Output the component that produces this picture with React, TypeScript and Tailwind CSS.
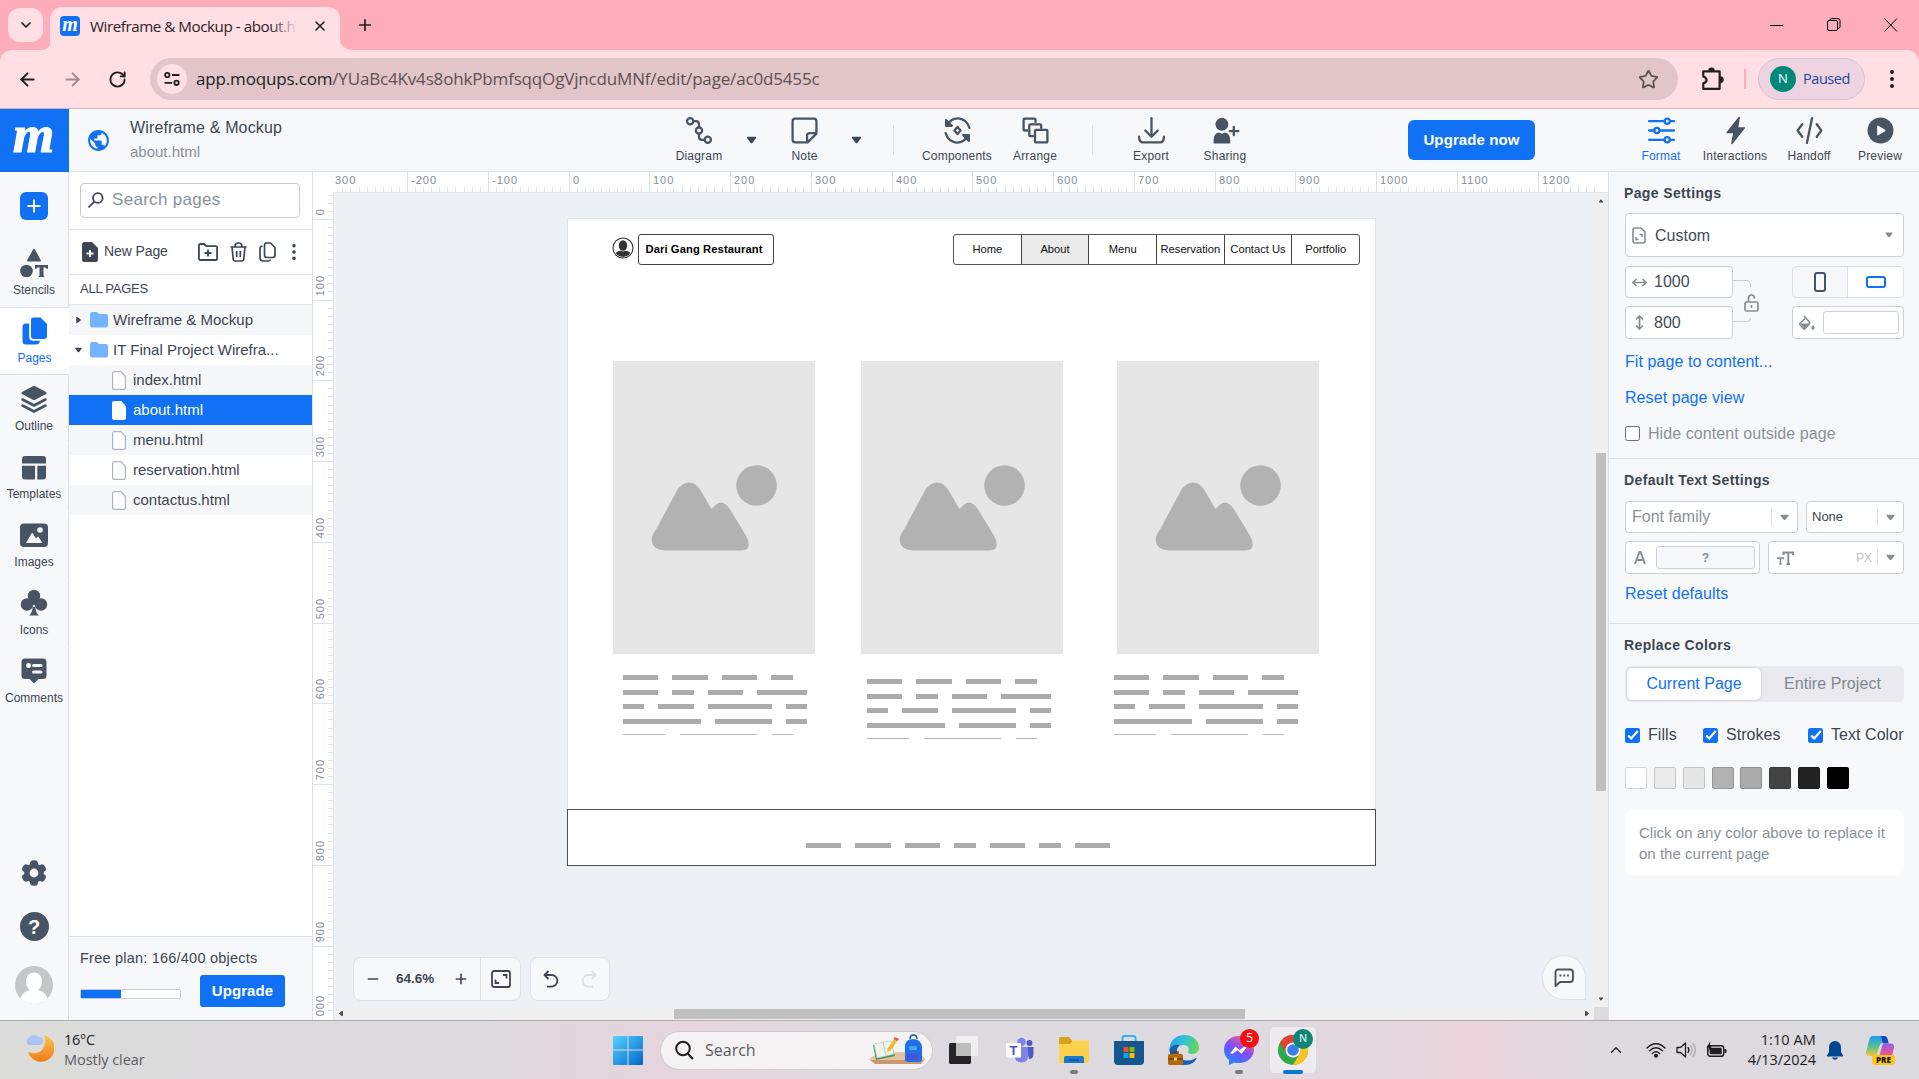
import React from "react";
import {
  ArrowLeft,
  ArrowRight,
  RotateCw,
  Star,
  Plus,
  X,
  ChevronDown,
  ChevronUp,
  Minus,
} from "lucide-react";

const arial = "font-['Liberation_Sans',Arial,sans-serif]";
const segoe = "font-['Open_Sans','Noto_Sans',sans-serif]";

function Caret({ className = "" }: { className?: string }) {
  return (
    <svg viewBox="0 0 10 8" className={`shrink-0 ${className}`} fill="currentColor">
      <path d="M1.2 .8h7.6c.8 0 1.1.8.6 1.4L6 6.7c-.5.7-1.5.7-2 0L.6 2.2C.1 1.6.4.8 1.2.8z" />
    </svg>
  );
}

function Dots({ className = "" }: { className?: string }) {
  return (
    <svg viewBox="0 0 6 20" className={className} fill="currentColor">
      <circle cx="3" cy="3" r="2" />
      <circle cx="3" cy="10" r="2" />
      <circle cx="3" cy="17" r="2" />
    </svg>
  );
}

/* ---------- Browser chrome ---------- */

function TabStrip() {
  return (
    <div className={`flex h-[50px] shrink-0 items-end bg-[#ffadbb] ${segoe}`}>
      <div className="mb-2 ml-2 flex h-[34px] w-[35px] items-center justify-center rounded-xl bg-[#ffdee4] text-[#1f1f1f]">
        <ChevronDown size={16} strokeWidth={2.6} />
      </div>
      <svg viewBox="0 0 10 10" className="-mr-px h-[10px] w-[8px]" preserveAspectRatio="none">
        <path d="M10 0A10 10 0 0 1 0 10h10z" fill="#ffdee4" />
      </svg>
      <div className="flex h-[43px] w-[290px] items-center rounded-t-xl bg-[#ffdee4] pr-[12px] pb-[5px] pl-[10px]">
        <div className="flex size-5 items-center justify-center rounded-[4px] bg-[#1171f4]">
          <span className="-mt-[5px] font-['Liberation_Serif',serif] text-[20px] leading-none font-bold text-white italic">
            m
          </span>
        </div>
        <div className="relative ml-[10px] w-[208px] overflow-hidden text-[15.2px] leading-6 tracking-[-0.46px] whitespace-nowrap text-[#2b2224]">
          Wireframe &amp; Mockup - about.h
          <div className="absolute inset-y-0 right-0 w-7 bg-linear-to-r from-transparent to-[#ffdee4]" />
        </div>
        <X className="ml-auto text-[#1f1f1f]" size={16} strokeWidth={2.4} />
      </div>
      <svg viewBox="0 0 10 10" className="h-[10px] w-[12px]" preserveAspectRatio="none">
        <path d="M0 0A10 10 0 0 0 10 10H0z" fill="#ffdee4" />
      </svg>
      <Plus className="mb-[16px] ml-[4px] text-[#1f1f1f]" size={18} strokeWidth={2.3} />
      <div className="mb-[18px] ml-auto flex items-center gap-[43px] pr-[21px] text-black">
        <svg viewBox="0 0 14 14" className="size-[14px]" stroke="currentColor">
          <path d="M0 7.5h13" />
        </svg>
        <svg viewBox="0 0 14 14" className="size-[14px]" fill="none" stroke="currentColor">
          <rect x=".5" y="2.5" width="10" height="10" rx="1.5" />
          <path d="M3 2.5V2Q3 .6 4.5.6H11Q13 .6 13 2.6v6Q13 10.5 11 10.5" />
        </svg>
        <svg viewBox="0 0 14 14" className="size-[14px]" stroke="currentColor">
          <path d="M.5.5l12.5 13M13 .5L.5 13.5" />
        </svg>
      </div>
    </div>
  );
}

function AddressBar() {
  return (
    <div className={`h-[59px] shrink-0 bg-[#ffadbb] ${segoe}`}>
      <div className="flex h-full items-center rounded-t-xl border-b border-[#cfb4b9] bg-[#ffdee4]">
        <ArrowLeft className="ml-[17px] text-[#1f1f1f]" size={21} strokeWidth={2.2} />
        <ArrowRight className="ml-[24px] text-[#a08b8f]" size={21} strokeWidth={2.2} />
        <RotateCw className="ml-[25px] text-[#1f1f1f]" size={19} strokeWidth={2.4} />
        <div className="ml-[23px] flex h-[42px] w-[1528px] items-center rounded-full bg-[#e1c5c9] pl-[7px]">
          <div className="flex size-[30px] items-center justify-center rounded-full bg-[#ffdee4]">
            <svg viewBox="0 0 18 18" className="size-[18px]" fill="none" stroke="#1f1f1f" strokeWidth="1.8">
              <circle cx="4.3" cy="5" r="2.2" />
              <path d="M9 5h7.5M1.500 12.800H9" />
              <circle cx="13.500" cy="12.800" r="2.200" />
            </svg>
          </div>
          <div className="ml-[9px] text-[17px] tracking-[-0.165px] whitespace-nowrap text-[#5f5054]">
            <span className="text-[#1f1f1f]">app.moqups.com</span>
            /YUaBc4Kv4s8ohkPbmfsqqOgVjncduMNf/edit/page/ac0d5455c
          </div>
          <Star className="mr-[19px] ml-auto text-[#5f5054]" size={21} strokeWidth={2} />
        </div>
        <svg viewBox="0 0 22 22" className="ml-[22px] size-[24px]" fill="none" stroke="#1f1f1f" strokeWidth="2">
          <path d="M3 4h15v16H3v-5q3-.8 3-3T3 8.700z" strokeLinejoin="round" />
          <path d="M8.500 3.500a2 2 0 0 1 4 0M18.500 9.500a2.200 2.200 0 0 1 0 4.400" fill="#1f1f1f" />
        </svg>
        <div className="ml-[20px] h-[20px] w-[2px] bg-[#ffadbb]" />
        <div className="ml-[12px] flex h-[42px] w-[107px] items-center rounded-full border border-[#d6c3d3] bg-[#edd4e0] pl-[11px]">
          <div className="flex size-[26px] items-center justify-center rounded-full bg-[#00897b] text-[13px] text-white">
            N
          </div>
          <span className="ml-[7px] text-[14.500px] tracking-[-0.450px] text-[#23479b]">Paused</span>
        </div>
        <Dots className="ml-[24px] h-[20px] w-[6px] text-[#1f1f1f]" />
      </div>
    </div>
  );
}

/* ---------- App header ---------- */

function Tool({
  label,
  className,
  children,
}: {
  label: string;
  className: string;
  children: React.ReactNode;
}) {
  return (
    <div className={`flex h-full shrink-0 flex-col items-center pt-[7px] ${className}`}>
      <svg viewBox="0 0 28 28" className="size-[29px]" fill="none" stroke="currentColor" strokeWidth="2.200" strokeLinecap="round" strokeLinejoin="round">
        {children}
      </svg>
      <span className="mt-[3px] text-[12px] leading-4 tracking-[0.200px] text-[#3c4654] in-data-active:text-[#1171f4]">{label}</span>
    </div>
  );
}

function HeaderRule({ className }: { className: string }) {
  return (
    <div className={`flex shrink-0 justify-center ${className}`}>
      <div className="h-[30px] w-px bg-[#dcdfe5]" />
    </div>
  );
}

function Header() {
  return (
    <header className="flex h-[63px] shrink-0 items-center bg-[#f7f8fa] text-[#475464]">
      <div className="flex h-full w-[69px] shrink-0 items-center justify-center bg-[#1171f4]">
        <span className="-mt-[12px] -ml-[2px] font-['Liberation_Serif',serif] text-[53px] leading-none font-bold text-white italic [-webkit-text-stroke:1.200px_#fff]">
          m
        </span>
      </div>
      <div className="flex h-full flex-1 items-center border-b border-[#dddfe6]">
        <svg viewBox="0 0 24 24" className="ml-[17px] size-[25px] shrink-0" fill="#1171f4">
          <path d="M12 2C6.480 2 2 6.480 2 12s4.480 10 10 10 10-4.480 10-10S17.520 2 12 2zm-1 17.930c-3.950-.490-7-3.850-7-7.930 0-.620.080-1.210.210-1.790L9 15v1c0 1.100.900 2 2 2v1.930zm6.900-2.540c-.260-.810-1-1.390-1.900-1.390h-1v-3c0-.550-.450-1-1-1H8v-2h2c.550 0 1-.450 1-1V7h2c1.100 0 2-.900 2-2v-.410c2.930 1.190 5 4.060 5 7.410 0 2.080-.800 3.970-2.100 5.390z" />
        </svg>
        <div className="ml-[19px] w-[538px] shrink-0">
          <div className="text-[16px] leading-[22px] tracking-[0.150px] text-[#3c4654]">Wireframe &amp; Mockup</div>
          <div className="mt-[2px] text-[15px] leading-[22px] text-[#8a9298]">about.html</div>
        </div>
        <Tool label="Diagram" className="w-[62px]">
          <circle cx="5" cy="5" r="3" />
          <circle cx="13.500" cy="14" r="3" />
          <circle cx="22" cy="23" r="3" />
          <path d="M8 5h2.500q3 0 3 3v3M13.500 17v3q0 3 3 3H19" />
        </Tool>
        <div className="flex w-[42px] shrink-0 justify-center text-[#3c4654]">
          <Caret className="h-[8px] w-[11px]" />
        </div>
        <Tool label="Note" className="w-[65px]">
          <path d="M5 2.500h18q2.500 0 2.500 2.500v12l-8.500 8.500H5Q2.500 25.500 2.500 23V5Q2.500 2.500 5 2.500zM16.500 25v-6q0-2.500 2.500-2.500h6" />
        </Tool>
        <div className="flex w-[39px] shrink-0 justify-center text-[#3c4654]">
          <Caret className="h-[8px] w-[11px]" />
        </div>
        <HeaderRule className="w-[34px]" />
        <Tool label="Components" className="w-[94px]">
          <path d="M4 9Q8 2 15 2.400q8 1 10.500 9M24 19q-4 7-11 6.600-8-1-10.500-9" />
          <path d="M3 4v5.500h5.500zM25 24v-5.500h-5.500z" fill="currentColor" />
          <path d="M14 10.500l3 3.500-3 3.500-3-3.500z" />
        </Tool>
        <Tool label="Arrange" className="w-[62px]">
          <path d="M6 14H3.500Q2.500 14 2.500 13V3.500q0-1 1-1H13q1 0 1 1V6" />
          <path d="M11.500 19.500H9q-1 0-1-1V9q0-1 1-1h9.500q1 0 1 1v2.500" />
          <rect x="13.500" y="13.500" width="12" height="12" rx="1" />
        </Tool>
        <HeaderRule className="w-[52px]" />
        <Tool label="Export" className="w-[66px]">
          <path d="M14 2v17M8 14l6 6 6-6M2 20q0 5.500 4 5.500h16q4 0 4-5.500" />
        </Tool>
        <Tool label="Sharing" className="w-[82px]">
          <circle cx="10.500" cy="8" r="6.200" fill="currentColor" stroke="none" />
          <path d="M2.500 26.500v-3q0-6.500 5-7.500l3 1.200 3-1.200q5 1 5 7.500v3z" fill="currentColor" stroke="none" />
          <path d="M22 10.500v8M18 14.500h8.500" />
        </Tool>
        <div className="ml-[142px] flex h-[40px] w-[127px] shrink-0 items-center justify-center rounded-md bg-[#1171f4] text-[15px] font-bold tracking-[0.100px] text-white">
          Upgrade now
        </div>
        <div className="w-[91px] shrink-0" />
        <div data-active className="h-full text-[#1171f4]">
          <Tool label="Format" className="w-[70px]">
            <path d="M2 5h15M23 5h3M2 14h5M13 14h13M2 23h15M23 23h3" />
            <circle cx="19.500" cy="5" r="2.500" />
            <circle cx="9.500" cy="14" r="2.500" />
            <circle cx="19.500" cy="23" r="2.500" />
          </Tool>
        </div>
        <Tool label="Interactions" className="w-[78px]">
          <path d="M17.500 1.500L6 16h6.500L10.500 26.500 22.500 11.500H16z" fill="currentColor" strokeWidth="1.400" />
        </Tool>
        <Tool label="Handoff" className="w-[70px]">
          <path d="M7 8l-4.500 6L7 20M21 8l4.500 6L21 20M16.500 2l-5 24" />
        </Tool>
        <Tool label="Preview" className="w-[72px]">
          <circle cx="14" cy="14" r="12.500" fill="currentColor" stroke="none" />
          <path d="M11.500 10v8l6.500-4z" fill="#f7f8fa" stroke="#f7f8fa" strokeWidth="1.500" />
        </Tool>
      </div>
    </header>
  );
}

/* ---------- Left rail ---------- */

function RailItem({ label, active, children }: { label: string; active?: boolean; children: React.ReactNode }) {
  return (
    <div
      className={`flex h-[68px] w-[69px] shrink-0 flex-col items-center border-y pt-[9px] ${
        active ? "border-[#dddfe6] bg-white text-[#1171f4]" : "border-r border-y-transparent border-r-[#dddfe6] text-[#475464]"
      }`}
    >
      <svg viewBox="0 0 28 28" className="size-[28px]" fill="currentColor">
        {children}
      </svg>
      <span className={`mt-[5px] text-[12px] leading-4 ${active ? "" : "text-[#3c4654]"}`}>{label}</span>
    </div>
  );
}

function Rail() {
  return (
    <div className="flex w-[69px] shrink-0 flex-col bg-[#f7f8fa]">
      <div className="flex h-[67px] shrink-0 justify-center border-r border-[#dddfe6] pt-[20px]">
        <div className="flex size-[28px] items-center justify-center rounded-md bg-[#1171f4] text-white">
          <Plus size={20} strokeWidth={2.2} />
        </div>
      </div>
      <RailItem label="Stencils">
        <path d="M14 0q.7 0 1.200.9l5.500 10q.6 1.600-1 1.600H8.300q-1.600 0-1-1.600l5.500-10Q13.300 0 14 0z" />
        <circle cx="6.500" cy="22" r="6.300" />
        <path d="M15 16h13v3.800h-1.500q-.3-1.600-2-1.600h-1v8q0 1.200 1.200 1.500V29h-6.400v-1.300q1.200-.3 1.200-1.500v-8h-1q-1.700 0-2 1.600H15z" />
      </RailItem>
      <RailItem label="Pages" active>
        <path d="M12 .5h7.500L26 7v12q0 3-3 3H13q-3 0-3-3V3Q10 .5 12 .5z" />
        <path d="M8.200 6.500v13.300q0 4 4 4h6.800q-.5 3.700-4 3.700H5q-3.500 0-3.500-3.500V10q0-3.500 3-3.500z" />
      </RailItem>
      <RailItem label="Outline">
        <path d="M12.800 1.300q1.200-.6 2.400 0L26 7q1.400 1 0 2l-10.800 5.800q-1.200.6-2.400 0L2 9Q.6 8 2 7z" />
        <g fill="none" stroke="currentColor" strokeWidth="2.600" strokeLinejoin="round" strokeLinecap="round">
          <path d="M2.500 14.500L14 20.500l11.500-6M2.500 20.500L14 26.500l11.500-6" />
        </g>
      </RailItem>
      <RailItem label="Templates">
        <path d="M5 3h18q3 0 3 3v4.500H2V6q0-3 3-3zM2 12.800h13v13.700H5q-3 0-3-3zM17.300 12.800H26v10.700q0 3-3 3h-5.700z" />
      </RailItem>
      <RailItem label="Images">
        <rect x="0" y="2.500" width="28" height="23.500" rx="4" />
        <circle cx="20" cy="9" r="2.800" fill="#f7f8fa" />
        <path d="M6 22l5.500-9.500q.7-.9 1.400 0l3 5 1.500-1.600q.7-.7 1.300 0L22.500 22z" fill="#f7f8fa" />
      </RailItem>
      <RailItem label="Icons">
        <circle cx="14" cy="7" r="6.200" />
        <circle cx="7" cy="15.500" r="6.200" />
        <circle cx="21" cy="15.500" r="6.200" />
        <path d="M10 8h8v8h-8zM12.700 18h2.600q0 5 3.700 8.500H9q3.700-3.500 3.700-8.500z" />
      </RailItem>
      <RailItem label="Comments">
        <path d="M5 1.500h18q3.500 0 3.500 3.500v13.500q0 3.500-3.500 3.500h-4.500L14 26.500 9.500 22H5q-3.500 0-3.500-3.500V5Q1.500 1.500 5 1.500z" />
        <circle cx="8.500" cy="8.500" r="2.500" fill="#f7f8fa" />
        <path d="M13.500 8.500h7.500M13.500 15h7.500" stroke="#f7f8fa" strokeWidth="3" strokeLinecap="round" />
      </RailItem>
      <div className="flex flex-1 flex-col items-center border-r border-[#dddfe6] pt-[144px]">
        <svg viewBox="0 0 28 28" className="size-[28px]">
          <g fill="#475464">
            {[0, 60, 120].map((a) => (
              <rect key={a} x="10" y="1.200" width="8" height="25.600" rx="3.500" transform={`rotate(${a} 14 14)`} />
            ))}
            <circle cx="14" cy="14" r="9.800" />
          </g>
          <circle cx="14" cy="14" r="4.400" fill="#f7f8fa" />
        </svg>
        <div className="mt-[25px] flex size-[29px] items-center justify-center rounded-full bg-[#475464] text-[20px] font-bold text-white">
          ?
        </div>
        <svg viewBox="0 0 38 38" className="mt-[25px] size-[38px]">
          <clipPath id="face">
            <circle cx="19" cy="19" r="19" />
          </clipPath>
          <g clipPath="url(#face)">
            <rect width="38" height="38" fill="#c4c6c8" />
            <path d="M19 6.500c5 0 8 3.800 8 8.800 0 4-1.500 7-4 8.700 5 1 9.500 4 11 14H4c1.500-10 6-13 11-14-2.500-1.700-4-4.700-4-8.700 0-5 3-8.800 8-8.800z" fill="#fff" />
          </g>
        </svg>
      </div>
    </div>
  );
}

/* ---------- Pages panel ---------- */

function FolderRow({ name, open, shaded }: { name: string; open?: boolean; shaded?: boolean }) {
  return (
    <div className={`flex h-[30px] items-center pl-[6px] ${shaded ? "bg-[#f6f7f9]" : ""}`}>
      <Caret className={`h-[6px] w-[7px] text-[#3c4654] ${open ? "" : "-rotate-90"}`} />
      <svg viewBox="0 0 18 16" className="ml-[8px] h-[16px] w-[18px]" fill="#74b4ff">
        <path d="M2 0h4.500q1 0 1.500.8L9 2h7q2 0 2 2v9.500q0 2-2 2H2q-2 0-2-2V2Q0 0 2 0z" />
      </svg>
      <span className="ml-[5px] text-[15px] whitespace-nowrap">{name}</span>
    </div>
  );
}

function PageRow({ name, selected, shaded }: { name: string; selected?: boolean; shaded?: boolean }) {
  return (
    <div
      className={`flex h-[30px] items-center pl-[43px] ${
        selected ? "bg-[#1171f4] text-white" : shaded ? "bg-[#f6f7f9]" : ""
      }`}
    >
      <svg viewBox="0 0 14 19" className="h-[19px] w-[14px]" fill="#fff" stroke={selected ? "#fff" : "#aeb4bd"} strokeWidth="1.200">
        <path d="M2.200.6H9L13.400 5.500v11.300q0 1.600-1.600 1.600H2.200q-1.600 0-1.600-1.600V2.200Q.6.6 2.200.6z" />
      </svg>
      <span className="ml-[7px] text-[15px]">{name}</span>
    </div>
  );
}

function PagesPanel() {
  return (
    <div className="flex w-[244px] shrink-0 flex-col border-r border-[#dddfe6] bg-white text-[#3c4654]">
      <div className="border-b border-[#e4e6eb] px-[11px] pt-[11px] pb-[11px]">
        <div className="flex h-[35px] w-[220px] items-center rounded-[4px] border border-[#c9ccd3] pb-px pl-[7px]">
          <svg viewBox="0 0 16 16" className="size-[16px]" fill="none" stroke="#3c4654" strokeWidth="1.800" strokeLinecap="round">
            <circle cx="9.800" cy="6" r="4.800" />
            <path d="M6 9.800L1 14.800" />
          </svg>
          <span className="ml-[8px] text-[17px] tracking-[0.300px] text-[#8a9298]">Search pages</span>
        </div>
      </div>
      <div className="flex h-[45px] items-center border-b border-[#e4e6eb] pl-[13px]">
        <svg viewBox="0 0 16 20" className="h-[20px] w-[16px]">
          <path d="M2.500 0H10l6 6v11.500q0 2.500-2.500 2.500h-11Q0 20 0 17.500v-15Q0 0 2.500 0z" fill="#3c4654" />
          <path d="M8 8v7M4.500 11.500h7" stroke="#fff" strokeWidth="1.800" />
        </svg>
        <span className="mt-[-2px] ml-[6px] w-[94px] text-[14px] tracking-[-0.100px]">New Page</span>
        <svg viewBox="0 0 20 18" className="h-[18px] w-[20px]" fill="none" stroke="#3c4654" strokeWidth="1.800" strokeLinejoin="round">
          <path d="M2.500 1H6l2.200 2.200h9.300q1.600 0 1.600 1.600v10.600Q19.100 17 17.500 17h-15Q.9 17 .9 15.400V2.600Q.9 1 2.500 1zM10 6.500v7M6.500 10h7" />
        </svg>
        <svg viewBox="0 0 17 20" className="ml-[12px] h-[20px] w-[17px]" fill="none" stroke="#3c4654" strokeWidth="1.700" strokeLinejoin="round">
          <path d="M.5 5h16M2 5l1.200 12q.2 2 2 2h6.600q1.800 0 2-2L15 5M5 4.500q0-3.500 3.500-3.500T12 4.500M6.700 9v6M10.300 9v6" />
        </svg>
        <svg viewBox="0 0 17 20" className="ml-[12px] h-[20px] w-[17px]" fill="none" stroke="#3c4654" strokeWidth="1.700" strokeLinejoin="round">
          <path d="M7.500 1h4l4.500 4.500V13q0 2.500-2.500 2.500H8Q5.500 15.500 5.500 13V3.500Q5.500 1 7.500 1zM3.500 4Q1 4.200 1 7v8.500Q1 19 4.500 19H9q2 0 2.500-1.500" />
        </svg>
        <Dots className="ml-[15px] h-[18px] w-[6px]" />
      </div>
      <div className="flex h-[30px] items-center border-b border-[#e4e6eb] pb-[2px] pl-[11px] text-[13px] tracking-[-0.250px]">ALL PAGES</div>
      <FolderRow name="Wireframe & Mockup" shaded />
      <FolderRow name="IT Final Project Wirefra..." open />
      <PageRow name="index.html" shaded />
      <PageRow name="about.html" selected />
      <PageRow name="menu.html" shaded />
      <PageRow name="reservation.html" />
      <PageRow name="contactus.html" shaded />
      <div className="mt-auto h-[84px] border-t border-[#dddfe6] bg-[#f7f8fa] pt-[11px] pl-[11px]">
        <div className="text-[14.500px] leading-[20px] tracking-[0.220px]">Free plan: 166/400 objects</div>
        <div className="mt-[7px] flex items-center">
          <div className="mt-[6px] h-[10px] w-[101px] rounded-[2px] border border-[#c9ccd3] bg-white">
            <div className="h-full w-[40px] bg-[#1171f4]" />
          </div>
          <div className="ml-[19px] flex h-[32px] w-[85px] items-center justify-center rounded-[3px] bg-[#1171f4] text-[15px] font-bold tracking-[0.100px] text-white">
            Upgrade
          </div>
        </div>
      </div>
    </div>
  );
}

/* ---------- Canvas ---------- */

const UNIT = 0.8075;
const hMajors = [-200, -100, 0, 100, 200, 300, 400, 500, 600, 700, 800, 900, 1000, 1100, 1200];
const vMajors = [0, 100, 200, 300, 400, 500, 600, 700, 800, 900];
const hMinors = Array.from({ length: 156 }, (_, i) => i * 10 - 280);
const vMinors = Array.from({ length: 102 }, (_, i) => i * 10 - 30);

function TopRuler() {
  return (
    <div className="relative ml-[21px] h-[21px] shrink-0 overflow-hidden border-b border-[#e4e6eb] bg-white text-[11px] leading-[16px] tracking-[1px] text-[#858d96]">
      <span className="absolute top-0 left-[1px]">300</span>
      {hMinors.map((v) => (
        <i key={v} className="absolute bottom-0 h-[5px] w-px bg-[#dfe1e7]" style={{ left: Math.round(234.500 + v * UNIT) }} />
      ))}
      {hMajors.map((v) => (
        <span key={v} className="absolute top-0 h-[21px] border-l border-[#dfe1e7] pl-[3px]" style={{ left: Math.round(234.500 + v * UNIT) }}>
          {v}
        </span>
      ))}
    </div>
  );
}

function SideRuler() {
  return (
    <div className="relative w-[21px] shrink-0 overflow-hidden border-r border-[#e4e6eb] bg-white text-[11px] leading-[14px] tracking-[1px] text-[#858d96]">
      {vMinors.map((v) => (
        <i key={v} className="absolute right-0 h-px w-[5px] bg-[#dfe1e7]" style={{ top: Math.round(25.800 + v * UNIT) }} />
      ))}
      {vMajors.map((v) => (
        <div key={v} className="absolute left-0 h-px w-[21px] bg-[#dfe1e7]" style={{ top: Math.round(25.800 + v * UNIT) }}>
          <span className="absolute bottom-[5px] left-0 rotate-180 [writing-mode:vertical-rl]">{v}</span>
        </div>
      ))}
      <span className="absolute top-[802px] left-0 rotate-180 [writing-mode:vertical-rl]">000</span>
    </div>
  );
}

const loremRows = [
  [5, 5, 5, 3],
  [5, 3, 5, 7],
  [3, 5, 9, 3],
  [11, 8, 3],
  [6, 11, 3],
];

function Bars({ words, thin }: { words: number[]; thin?: boolean }) {
  return (
    <div className="flex gap-[14.100px]">
      {words.map((n, i) => (
        <div key={i} className={thin ? "h-px bg-[#b8b8b8]" : "h-[5px] bg-[#ababab]"} style={{ width: n * 7.08 }} />
      ))}
    </div>
  );
}

function Lorem({ className }: { className: string }) {
  return (
    <div className={`absolute flex flex-col gap-[9.700px] ${className}`}>
      {loremRows.map((r, i) => (
        <Bars key={i} words={r} thin={i === 4} />
      ))}
    </div>
  );
}

function ImageStub({ className }: { className: string }) {
  return (
    <svg viewBox="0 0 202 293" className={`absolute top-[142px] h-[293px] w-[202px] bg-[#e6e6e6] ${className}`} fill="#b2b2b2">
      <circle cx="143.500" cy="124.500" r="20.300" />
      <path d="M65 127.500Q70.500 121.500 76 121.500Q82.500 121.500 87 128.500L98.500 148Q104 141.500 108 141.500Q112 141.500 116.500 147.500L133.500 175.500Q140 189.500 128 189.500H52Q37 188.500 39 176Q39.500 173.500 43 168.500Z" />
    </svg>
  );
}

function Artboard() {
  return (
    <div className="absolute top-[25px] left-[233px] h-[648px] w-[809px] border border-[#e1e4ea] bg-white text-black">
      <svg viewBox="0 0 22 22" className="absolute top-[18px] left-[44px] size-[22px]">
        <clipPath id="user">
          <circle cx="11" cy="11" r="9" />
        </clipPath>
        <circle cx="11" cy="11" r="10" fill="#fff" stroke="#333" strokeWidth="1.100" />
        <g clipPath="url(#user)" fill="#333">
          <ellipse cx="11" cy="8.500" rx="4.200" ry="5.300" />
          <path d="M2 22q0-7.500 6.500-8.200l2.500.7 2.500-.7q6.500.7 6.500 8.200z" />
        </g>
      </svg>
      <div className="absolute top-[15px] left-[70px] flex h-[31px] w-[136px] items-center justify-center rounded-[3px] border border-[#444] pr-[4px] text-[11.200px] font-bold">
        <span className="tracking-[0.100px] whitespace-nowrap">Dari Gang Restaurant</span>
      </div>
      <div className="absolute top-[15px] left-[385px] flex h-[31px] w-[407px] divide-x divide-[#444] overflow-hidden rounded-[3px] border border-[#555] text-[11.200px] whitespace-nowrap text-[#111]">
        {["Home", "About", "Menu", "Reservation", "Contact Us", "Portfolio"].map((t) => (
          <div key={t} className={`flex flex-1 basis-0 items-center justify-center ${t === "About" ? "bg-[#ebebeb]" : ""}`}>
            <span className="-mx-2">{t}</span>
          </div>
        ))}
      </div>
      <ImageStub className="left-[45px]" />
      <ImageStub className="left-[293px]" />
      <ImageStub className="left-[549px]" />
      <Lorem className="top-[456px] left-[55px]" />
      <Lorem className="top-[460px] left-[299px]" />
      <Lorem className="top-[456px] left-[546px]" />
      <div className="absolute top-[590px] -left-px h-[57px] w-[809px] border border-[#4a4f52] bg-white pt-[33px] pl-[238px]">
        <Bars words={[5, 5, 5, 3, 5, 3, 5]} />
      </div>
    </div>
  );
}

function CanvasControls() {
  return (
    <>
      <div className="absolute bottom-[6px] left-[19px] flex h-[44px] items-center gap-[9px] text-[#3c4654]">
        <div className="flex h-full w-[168px] items-center rounded-lg border border-[#dfe2e9] bg-[#f7f8fa]">
          <Minus className="ml-[11px]" size={16} strokeWidth={2.4} />
          <span className="ml-[15px] w-[44px] text-[13.500px] font-bold">64.6%</span>
          <Plus className="ml-[13px]" size={16} strokeWidth={2.4} />
          <div className="ml-[11px] h-full w-px bg-[#dfe2e9]" />
          <svg viewBox="0 0 20 18" className="ml-[10px] h-[18px] w-[20px]" fill="none" stroke="currentColor" strokeWidth="1.800">
            <rect x="1" y="1" width="18" height="16" rx="2" />
            <path d="M12 5h3.500v3.500M8 13H4.500V9.500" />
          </svg>
        </div>
        <div className="flex h-full w-[80px] items-center justify-between rounded-lg border border-[#dfe2e9] bg-[#f7f8fa] px-[12px]">
          <svg viewBox="0 0 16 18" className="h-[18px] w-[16px]" fill="none" stroke="currentColor" strokeWidth="1.800">
            <path d="M5.500 1L1.500 5l4 4M2 5h6.500a5.800 5.800 0 0 1 0 11.700H4" />
          </svg>
          <svg viewBox="0 0 16 18" className="h-[18px] w-[16px] -scale-x-100 text-[#dcdfe4]" fill="none" stroke="currentColor" strokeWidth="1.800">
            <path d="M5.500 1L1.500 5l4 4M2 5h6.500a5.800 5.800 0 0 1 0 11.700H4" />
          </svg>
        </div>
      </div>
      <div className="absolute right-[8px] bottom-[7px] flex h-[45px] w-[44px] items-center justify-center rounded-full rounded-br-[3px] border border-[#dfe2e9] bg-[#f7f8fa]">
        <svg viewBox="0 0 20 19" className="h-[19px] w-[20px]" fill="none" stroke="#4b5560" strokeWidth="1.900" strokeLinejoin="round">
          <path d="M4 1.500h12q3 0 3 3V11q0 3-3 3H6l-4.500 4V4.500Q1.500 1.500 4 1.500z" />
          <path d="M5.500 7.500h1.800M9.300 7.500h1.800M13 7.500h1.800" />
        </svg>
      </div>
    </>
  );
}

function Workspace() {
  return (
    <div className="flex w-[1295px] shrink-0 flex-col bg-[#edf0f5]">
      <div className="bg-white">
        <TopRuler />
      </div>
      <div className="flex min-h-0 flex-1">
        <SideRuler />
        <div className="flex min-w-0 flex-1 flex-col">
          <div className="flex min-h-0 flex-1">
            <div className="relative min-w-0 flex-1 overflow-hidden">
              <Artboard />
              <CanvasControls />
            </div>
            <div className="flex w-[14px] shrink-0 flex-col items-center bg-[#f0f0f0] py-[6px] text-[#4a4a4a]">
              <Caret className="h-[4px] w-[6px] rotate-180" />
              <div className="mt-[250px] h-[338px] w-[10px] bg-[#c0c0c0]" />
              <Caret className="mt-auto h-[4px] w-[6px]" />
            </div>
          </div>
          <div className="flex h-[13px] shrink-0 items-center bg-[#f0f0f0] text-[#4a4a4a]">
            <Caret className="ml-[4px] h-[5px] w-[6px] rotate-90" />
            <div className="ml-[330px] h-[10px] w-[571px] bg-[#c0c0c0]" />
            <Caret className="mr-[4px] ml-auto h-[5px] w-[6px] -rotate-90" />
            <div className="h-full w-[14px] bg-[#dcdcdc]" />
          </div>
        </div>
      </div>
    </div>
  );
}

/* ---------- Format panel ---------- */

const field = "flex items-center rounded-[4px] border border-[#cdd0d7] bg-white";

function SectionTitle({ children }: { children: React.ReactNode }) {
  return <h2 className="-ml-px text-[14px] leading-5 font-bold tracking-[0.370px] text-[#3c4654]">{children}</h2>;
}

function CheckBox({ label }: { label: string }) {
  return (
    <label className="flex items-center gap-[8px]">
      <span className="flex size-[15px] items-center justify-center rounded-[2.500px] bg-[#1171f4]">
        <svg viewBox="0 0 12 12" className="size-[12px]" fill="none" stroke="#fff" strokeWidth="2.200">
          <path d="M1.200 6.500l3 3L10.800 2" />
        </svg>
      </span>
      {label}
    </label>
  );
}

const swatches = [
  "bg-white border-[#d4d6da]",
  "bg-[#ebebeb] border-[#c6c6c6]",
  "bg-[#e6e6e6] border-[#c2c2c2]",
  "bg-[#b2b2b2] border-[#969696]",
  "bg-[#aaaaaa] border-[#909090]",
  "bg-[#444444] border-[#3a3a3a]",
  "bg-[#222222] border-[#1c1c1c]",
  "bg-black border-black",
];

function FormatPanel() {
  return (
    <aside className="flex w-[311px] shrink-0 flex-col border-l border-[#dddfe6] bg-[#f7f8fa] text-[16px] leading-5 text-[#3c4654]">
      <section className="h-[287px] border-b border-[#dddfe6] pt-[11px] pr-[15px] pl-[16px]">
        <SectionTitle>Page Settings</SectionTitle>
        <div className={`${field} mt-[10px] h-[44px] pr-[10px] pl-[6px]`}>
          <svg viewBox="0 0 14 17" className="h-[17px] w-[14px]" fill="none" stroke="#858d93" strokeWidth="1.600">
            <path d="M3 1h6l4 4v9q0 2-2 2H3q-2 0-2-2V3q0-2 2-2zM7.500 7.500H10V10M6.500 12.500H4V10" />
          </svg>
          <span className="mt-px ml-[9px] text-[#444c55]">Custom</span>
          <Caret className="ml-auto h-[6px] w-[8px] text-[#858d93]" />
        </div>
        <div className="mt-[9px] flex">
          <div className="flex w-[108px] flex-col gap-[8px] text-[#444c55]">
            <div className={`${field} h-[32px] pl-[6px]`}>
              <svg viewBox="0 0 15 9" className="h-[9px] w-[15px]" fill="none" stroke="#858d93" strokeWidth="1.700">
                <path d="M1 4.500h13M4.500 1L1 4.500 4.500 8M10.500 1L14 4.500 10.500 8" />
              </svg>
              <span className="ml-[7px]">1000</span>
            </div>
            <div className={`${field} h-[33px] pl-[9px]`}>
              <svg viewBox="0 0 9 15" className="h-[15px] w-[9px]" fill="none" stroke="#858d93" strokeWidth="1.700">
                <path d="M4.500 1v13M1 4.500L4.500 1 8 4.500M1 10.500L4.500 14 8 10.500" />
              </svg>
              <span className="ml-[10px]">800</span>
            </div>
          </div>
          <div className="flex w-[59px] flex-col pt-[14px]">
            <div className="h-[7px] w-[18px] rounded-tr-[5px] border-t border-r border-[#cdd0d7]" />
            <svg viewBox="0 0 15 18" className="mt-[7px] ml-[11px] h-[18px] w-[15px]" fill="none" stroke="#858d93" strokeWidth="1.700">
              <rect x="1" y="8" width="13" height="9" rx="1.500" />
              <path d="M4.500 8V4.500Q4.500 1 7.500 1T10.500 4.500M7.500 11v3" />
            </svg>
            <div className="mt-[6px] h-[4px] w-[18px] rounded-br-[5px] border-r border-b border-[#cdd0d7]" />
          </div>
          <div className="flex flex-1 flex-col gap-[8px]">
            <div className="flex h-[32px] overflow-hidden rounded-[4px] border border-[#dddfe6]">
              <div className="flex w-[54px] items-center justify-center">
                <div className="h-[20px] w-[12px] rounded-[3px] border-2 border-[#475464]" />
              </div>
              <div className="flex flex-1 items-center justify-center border-l border-[#dddfe6] bg-white">
                <div className="h-[12px] w-[20px] rounded-[3px] border-2 border-[#1171f4]" />
              </div>
            </div>
            <div className={`${field} h-[33px] pr-[4px] pl-[6px]`}>
              <svg viewBox="0 0 17 15" className="h-[15px] w-[17px]">
                <path d="M5 .8l6 7-5 6q-.8.700-1.600 0L1 9.800q-.7-.8 0-1.600L6 3.500" fill="none" stroke="#858d93" strokeWidth="1.500" />
                <path d="M1 8.500h10.500l-5.700 5.800zM14 10q1.600 2 1.600 3a1.600 1.600 0 0 1-3.300 0q0-1 1.700-3z" fill="#858d93" />
              </svg>
              <div className="ml-auto h-[23px] w-[76px] rounded-[3px] border border-[#cdd0d7]" />
            </div>
          </div>
        </div>
        <div className="mt-[13px] tracking-[0.070px] text-[#1171f4]">Fit page to content...</div>
        <div className="mt-[16px] tracking-[0.070px] text-[#1171f4]">Reset page view</div>
        <label className="mt-[16px] flex items-center gap-[8px] tracking-[0.070px] text-[#8a9298]">
          <span className="-mt-px size-[15px] rounded-[2.500px] border border-[#6f6f73] bg-white" />
          Hide content outside page
        </label>
      </section>
      <section className="h-[165px] border-b border-[#dddfe6] pt-[11px] pr-[15px] pl-[16px]">
        <SectionTitle>Default Text Settings</SectionTitle>
        <div className="mt-[11px] flex h-[32px] justify-between">
          <div className={`${field} w-[173px] pr-[8px] pl-[6px] text-[#8a9298]`}>
            Font family
            <div className="mr-[8px] ml-auto h-[17px] w-px bg-[#dddfe6]" />
            <Caret className="h-[7px] w-[9px] text-[#858d93]" />
          </div>
          <div className={`${field} w-[98px] pr-[8px] pl-[5px] text-[13px]`}>
            None
            <div className="mr-[8px] ml-auto h-[17px] w-px bg-[#dddfe6]" />
            <Caret className="h-[7px] w-[9px] text-[#858d93]" />
          </div>
        </div>
        <div className="mt-[8px] flex h-[33px] justify-between">
          <div className={`${field} w-[135px] pr-[4px] pl-[8px]`}>
            <svg viewBox="0 0 12 13" className="h-[13px] w-[12px]" fill="none" stroke="#858d93" strokeWidth="1.900">
              <path d="M1 13L5.400 1h1.200L11 13M2.500 9h7" />
            </svg>
            <div className="ml-auto flex h-[23px] w-[99px] items-center justify-center rounded-[3px] border border-[#cdd0d7] bg-[#f7f8fa] text-[12px] font-bold text-[#858d93]">
              ?
            </div>
          </div>
          <div className={`${field} w-[136px] pr-[8px] pl-[8px] text-[12px] text-[#bfc4c9]`}>
            <svg viewBox="0 0 17 14" className="h-[14px] w-[17px]" fill="none" stroke="#858d93">
              <path d="M6.500 4V1.500h9.500V4M11.300 1.500V13M9.500 13h3.600" strokeWidth="1.900" />
              <path d="M.8 8.200V7h5.400v1.200M3.500 7v6M2.300 13h2.400" strokeWidth="1.600" />
            </svg>
            <span className="ml-auto">PX</span>
            <div className="mr-[8px] ml-[5px] h-[17px] w-px bg-[#dddfe6]" />
            <Caret className="h-[7px] w-[9px] text-[#858d93]" />
          </div>
        </div>
        <div className="mt-[10px] tracking-[0.070px] text-[#1171f4]">Reset defaults</div>
      </section>
      <section className="pt-[11px] pr-[15px] pl-[16px]">
        <SectionTitle>Replace Colors</SectionTitle>
        <div className="mt-[11px] flex h-[36px] rounded-[6px] bg-[#e9e9ef] p-[2px]">
          <div className="flex w-[134px] items-center justify-center rounded-[5px] bg-white text-[#1171f4] shadow-[0_0_1px_1px_rgba(0,0,0,0.080)]">
            Current Page
          </div>
          <div className="flex flex-1 items-center justify-center pl-[2px] tracking-[0.070px] text-[#7f8791]">Entire Project</div>
        </div>
        <div className="-mr-px mt-[22px] flex pt-px tracking-[0.050px]">
          <div className="w-[78px]">
            <CheckBox label="Fills" />
          </div>
          <div className="w-[105px]">
            <CheckBox label="Strokes" />
          </div>
          <CheckBox label="Text Color" />
        </div>
        <div className="mt-[22px] flex gap-[6.850px]">
          {swatches.map((s) => (
            <div key={s} className={`size-[22px] rounded-[2px] border ${s}`} />
          ))}
        </div>
        <div className="mt-[21px] h-[65px] rounded-lg bg-white px-[14px] pt-[12px] text-[15px] leading-[21px] tracking-[0.020px] whitespace-nowrap text-[#8a9298]">
          Click on any color above to replace it
          <br />
          on the current page
        </div>
      </section>
    </aside>
  );
}

/* ---------- Taskbar ---------- */

function RunningDot({ className }: { className: string }) {
  return <div className={`absolute left-1/2 h-[4px] w-[8px] -translate-x-1/2 rounded-full bg-[#7a7a7e] ${className}`} />;
}

function Taskbar() {
  return (
    <footer
      className={`flex h-[59px] shrink-0 items-center border-t border-[#aeaeb0] bg-[linear-gradient(90deg,#dcdcda_0%,#dcdadd_14%,#dcdadf_24%,#e3d6dc_33%,#e6d5dc_36%,#dcdade_44%,#dddbe0_64%,#e4d7de_72%,#ead4db_77%,#ddd9df_83%,#dbdbdf_100%)] ${segoe}`}
    >
      <svg viewBox="0 0 30 30" className="-mt-[4px] ml-[24px] size-[30px]">
        <defs>
          <linearGradient id="moon" x1="0" y1="0" x2="0" y2="1">
            <stop offset="0" stopColor="#f9c74c" />
            <stop offset="1" stopColor="#ef7d18" />
          </linearGradient>
        </defs>
        <path d="M20 2a13.500 13.500 0 1 1-16 17q9 3 14-2 5-6 2-15z" fill="url(#moon)" />
        <path d="M5 12a4 4 0 0 1 0-7.500A5.500 5.500 0 0 1 14 4a4 4 0 0 1 1.500 8z" fill="#a9c3f3" />
      </svg>
      <div className="ml-[10px] w-[539px] shrink-0 text-[14.500px] leading-5 tracking-[-0.050px]">
        <div className="tracking-[-0.300px] text-[#1c1c1c]">16°C</div>
        <div className="text-[#5a5a5e]">Mostly clear</div>
      </div>
      <svg viewBox="0 0 30 30" className="ml-[10px] size-[30px] shrink-0">
        <defs>
          <linearGradient id="win" x1="0" y1="0" x2="1" y2="1">
            <stop offset="0" stopColor="#55d3ff" />
            <stop offset="1" stopColor="#0067c8" />
          </linearGradient>
        </defs>
        <path d="M1 1h13.500v13.500H0V2q0-1 1-1zM15.500 1H29q1 0 1 1v12.500H15.500zM0 15.500h14.500V30H1q-1 0-1-1zM15.500 15.500H30V29q0 1-1 1H15.500z" fill="url(#win)" />
      </svg>
      <div className="ml-[17px] flex h-[39px] w-[273px] shrink-0 items-center rounded-full border border-[#cfcacf] bg-[#f5f2f4] pl-[13px]">
        <svg viewBox="0 0 20 20" className="size-[20px]" fill="none" stroke="#1f1f1f" strokeWidth="2" strokeLinecap="round">
          <circle cx="9" cy="8.500" r="6.800" />
          <path d="M13.800 13.500l4.500 5" />
        </svg>
        <span className="ml-[11px] text-[16px] tracking-[0px] text-[#5c5c5f]">Search</span>
        <svg viewBox="0 0 60 32" className="mr-[5px] ml-auto h-[32px] w-[60px]">
          <path d="M2 26q4-8 30-8t26 8z" fill="#e6c39c" />
          <path d="M3 26h54l-3 4H8z" fill="#c99a72" />
          <path d="M6 11l18-3 4 14-19 4z" fill="#3f9a5c" />
          <path d="M7 10l9-2 3 14-9 2zM16 8l8-1 3 13-8 2z" fill="#eef2ef" stroke="#b9c6bf" strokeWidth=".600" />
          <path d="M28 4l3 2-8 11-3 1 .3-3z" fill="#f3b52c" />
          <path d="M28 3l4 2-1.500 2-4-2z" fill="#e8604c" />
          <path d="M38 13q0-8 8-8t9 8v12q0 3-3 3H41q-3 0-3-3z" fill="#1f6fe6" />
          <path d="M43 5q0-4 3.500-4T50 5" fill="none" stroke="#1554b8" strokeWidth="1.500" />
          <path d="M40 20h12v5q0 1-1 1H41q-1 0-1-1z" fill="#4a52d8" />
          <rect x="42" y="12" width="8" height="4" rx="1.500" fill="#49a6ff" />
        </svg>
      </div>
      <svg viewBox="0 0 30 30" className="ml-[16px] size-[30px] shrink-0">
        <rect x="0" y="8" width="22" height="21" rx="1.500" fill="#252525" />
        <rect x="7" y="1" width="22" height="20" rx="1.500" fill="#f2f2f2" fillOpacity=".92" />
        <path d="M7 8h15v13H7z" fill="#bdbdbd" />
      </svg>
      <svg viewBox="0 0 28 26" className="ml-[27px] h-[26px] w-[28px] shrink-0">
        <circle cx="23.500" cy="6" r="3" fill="#5059c9" />
        <path d="M20 10h7.500v7q0 5-4.500 5z" fill="#5059c9" />
        <circle cx="15.500" cy="5" r="4.200" fill="#7b83eb" />
        <path d="M9 10h13v9q0 6.500-6.500 6.500T9 19z" fill="#7b83eb" />
        <rect x="0" y="6" width="15" height="14.500" rx="1" fill="#fff" />
        <text x="7.500" y="18" textAnchor="middle" fontSize="13" fontWeight="700" fill="#4b53bc" className={arial}>
          T
        </text>
      </svg>
      <div className="relative ml-[25px] h-[28px] w-[30px] shrink-0">
        <svg viewBox="0 0 30 28" className="h-[28px] w-[30px]">
          <path d="M1 1h9l3 3.500V9H0V2q0-1 1-1z" fill="#d9a21b" />
          <path d="M0 8h11l3-3.500h15q1 0 1 1V26q0 1-1 1H1q-1 0-1-1z" fill="#fdd04d" />
          <path d="M5 27v-5q0-2 2-2h16q2 0 2 2v5z" fill="#1878cf" />
          <path d="M10 24h10" stroke="#0b4e94" strokeWidth="1.500" />
        </svg>
        <RunningDot className="-bottom-[10px]" />
      </div>
      <svg viewBox="0 0 30 30" className="ml-[25px] size-[30px] shrink-0">
        <path d="M8.500 6V3q0-2 2-2h9q2 0 2 2v3" fill="none" stroke="#34b3f1" strokeWidth="2" />
        <path d="M0 6h30v20q0 4-4 4H4q-4 0-4-4z" fill="#15568f" />
        <path d="M9.500 12h5v5h-5z" fill="#f25022" />
        <path d="M15.500 12h5v5h-5z" fill="#7fba00" />
        <path d="M9.500 18h5v5h-5z" fill="#00a4ef" />
        <path d="M15.500 18h5v5h-5z" fill="#ffb900" />
      </svg>
      <svg viewBox="0 0 32 32" className="ml-[24px] size-[32px] shrink-0">
        <defs>
          <linearGradient id="edge" x1="0" y1="0" x2="1" y2=".3">
            <stop offset="0" stopColor="#1b9de2" />
            <stop offset=".5" stopColor="#34c1dd" />
            <stop offset="1" stopColor="#62d65a" />
          </linearGradient>
        </defs>
        <path d="M1.500 17C1 7 8 1 16.500 1 25 1 31 7 31 13.500c0 4-3 6.500-7 6.500-3.500 0-4.500-1.500-3.500-3.500 1-3-1-5.500-5-5.500-7 0-11 4-9 13z" fill="url(#edge)" />
        <path d="M1.500 16C3 11 8 10 12 11q-4 3-3 8 2 7 9 7.500 6 .5 11-3Q26 31 17 31 3 31 1.500 16z" fill="#1263b5" />
        <rect x="0" y="20" width="15" height="11" rx="1.500" fill="#b0690f" />
        <path d="M5 20v-2h5v2M0 25h15" fill="none" stroke="#713f08" strokeWidth="1.300" />
        <rect x="6" y="23.500" width="3" height="3" fill="#ffcf4a" />
      </svg>
      <div className="relative ml-[24px] size-[30px] shrink-0">
        <svg viewBox="0 0 30 30" className="size-[30px]">
          <defs>
            <linearGradient id="msg" x1=".2" y1="1" x2=".8" y2="0">
              <stop offset="0" stopColor="#1a8cff" />
              <stop offset=".5" stopColor="#7c4dff" />
              <stop offset="1" stopColor="#ff5f78" />
            </linearGradient>
          </defs>
          <path d="M15 1c8.500 0 15 6 15 13.500S23.500 28 15 28q-2.500 0-4.500-.6L5 30v-5Q0 21 0 14.500C0 7 6.500 1 15 1z" fill="url(#msg)" />
          <path d="M6 18.500l5.500-7 4 3.500 5-3.500 2.500.3-5.500 7-4-3.500-5 3.500z" fill="#fff" />
        </svg>
        <div className="absolute -top-[6px] left-[16px] flex size-[19px] items-center justify-center rounded-full bg-[#f40f10] text-[12.500px] text-white">
          5
        </div>
        <RunningDot className="-bottom-[9px]" />
      </div>
      <div className="relative ml-[15px] flex size-[48px] shrink-0 items-center justify-center rounded-[5px] border border-[#dcd5d9] bg-[#efeaed]">
        <svg viewBox="0 0 30 30" className="size-[30px]">
          <circle cx="15" cy="15" r="15" fill="#2da94f" />
          <path d="M2 7.500A15 15 0 0 1 28 7.500H15a7.500 7.500 0 0 0-6.500 11.200z" fill="#e8402f" />
          <path d="M28 7.500A15 15 0 0 1 14.800 30l6.700-11.300A7.500 7.500 0 0 0 15 7.500z" fill="#fcc31e" />
          <circle cx="15" cy="15" r="7.500" fill="#fff" />
          <circle cx="15" cy="15" r="5.800" fill="#3b7ded" />
        </svg>
        <div className="absolute top-[2px] left-[23px] flex size-[20px] items-center justify-center rounded-full bg-[#0e8577] text-[10.500px] font-semibold text-[#cfe8e4]">
          N
        </div>
        <div className="absolute bottom-[-1px] left-[13px] h-[4px] w-[20px] rounded-full bg-[#0078d4]" />
      </div>
      <div className="ml-auto flex items-center text-[#1c1c1c]">
        <ChevronUp size={18} strokeWidth={1.8} />
        <svg viewBox="0 0 20 16" className="ml-[21px] h-[16px] w-[20px]" fill="none" stroke="currentColor" strokeWidth="1.400" strokeLinecap="round">
          <path d="M1 6q9-8.500 18 0M3.500 8.800q6.500-6 13 0M6.200 11.400q3.800-3.400 7.600 0" />
          <circle cx="10" cy="13.700" r="1.300" fill="currentColor" />
        </svg>
        <svg viewBox="0 0 21 18" className="ml-[10px] h-[18px] w-[21px]" fill="none" stroke="currentColor" strokeWidth="1.300" strokeLinejoin="round" strokeLinecap="round">
          <path d="M1 6.500h3.500L9.500 2v14L4.500 11.500H1z" />
          <path d="M12 6.500q1.800 2.500 0 5" />
          <path d="M14.500 4.500q3.500 4.500 0 9M17 2.500q5 6.500 0 13" stroke="#aaa8ad" />
        </svg>
        <svg viewBox="0 0 21 17" className="-mt-[2px] ml-[9px] h-[17px] w-[21px]">
          <rect x="1.700" y="4.700" width="16" height="10.600" rx="2.500" fill="none" stroke="currentColor" strokeWidth="1.400" />
          <rect x="3.700" y="6.700" width="12" height="6.600" rx="1" fill="currentColor" />
          <path d="M18.500 8h1q1 0 1 1v2q0 1-1 1h-1zM4.500 0L.5 6.500H3L2 11l4-6H3.700z" fill="currentColor" />
        </svg>
        <div className="ml-[15px] w-[74px] text-right text-[14.500px] leading-5 tracking-[-0.050px] whitespace-nowrap">
          <div className="tracking-[0.100px]">1:10 AM</div>
          <div>4/13/2024</div>
        </div>
        <svg viewBox="0 0 16 19" className="ml-[11px] h-[19px] w-[16px]" fill="#00458f">
          <path d="M8 0q5.500.3 6 6v5l2 3.500q.3 1-.8 1H.8q-1.100 0-.8-1L2 11V6Q2.500.3 8 0zM5 16.500h6q-.8 2.300-3 2.300t-3-2.300z" />
        </svg>
        <div className="relative mr-[25px] ml-[23px] size-[28px]">
          <svg viewBox="0 0 28 26" className="h-[26px] w-[28px]">
            <defs>
              <linearGradient id="cpA" x1="0" y1="0" x2="0" y2="1">
                <stop offset="0" stopColor="#1b9af5" />
                <stop offset=".55" stopColor="#5cc28c" />
                <stop offset="1" stopColor="#f5c63a" />
              </linearGradient>
              <linearGradient id="cpB" x1="0" y1="0" x2="0" y2="1">
                <stop offset="0" stopColor="#9b5cf0" />
                <stop offset="1" stopColor="#f4577f" />
              </linearGradient>
            </defs>
            <path d="M7 0h11q2.500 0 3.500 3l1 4H17q-2.500 0-3.500 3l-2.500 8q-.8 2-3 2H3q-3.500 0-3-4L3.500 3Q4.500 0 7 0z" fill="url(#cpA)" />
            <path d="M15 0h3q2.500 0 3.500 3l1.200 4.500H17z" fill="#1548c9" />
            <path d="M18 7.500h6.500q4 0 3.500 4L26 20H12q1.500-.5 2-2.500l2-7.500q.6-2.500 2-2.500z" fill="url(#cpB)" />
          </svg>
          <div className="absolute -bottom-px left-[6px] flex h-[10px] w-[23px] items-center justify-center rounded-[3px] bg-[#ffc517] text-[8px] leading-none font-extrabold text-[#1c1c1c]">
            PRE
          </div>
        </div>
      </div>
    </footer>
  );
}

export default function App() {
  return (
    <div className={`flex h-[1079px] w-[1919px] flex-col overflow-hidden bg-white ${arial}`}>
      <TabStrip />
      <AddressBar />
      <Header />
      <main className="flex min-h-0 flex-1">
        <Rail />
        <PagesPanel />
        <Workspace />
        <FormatPanel />
      </main>
      <Taskbar />
    </div>
  );
}
